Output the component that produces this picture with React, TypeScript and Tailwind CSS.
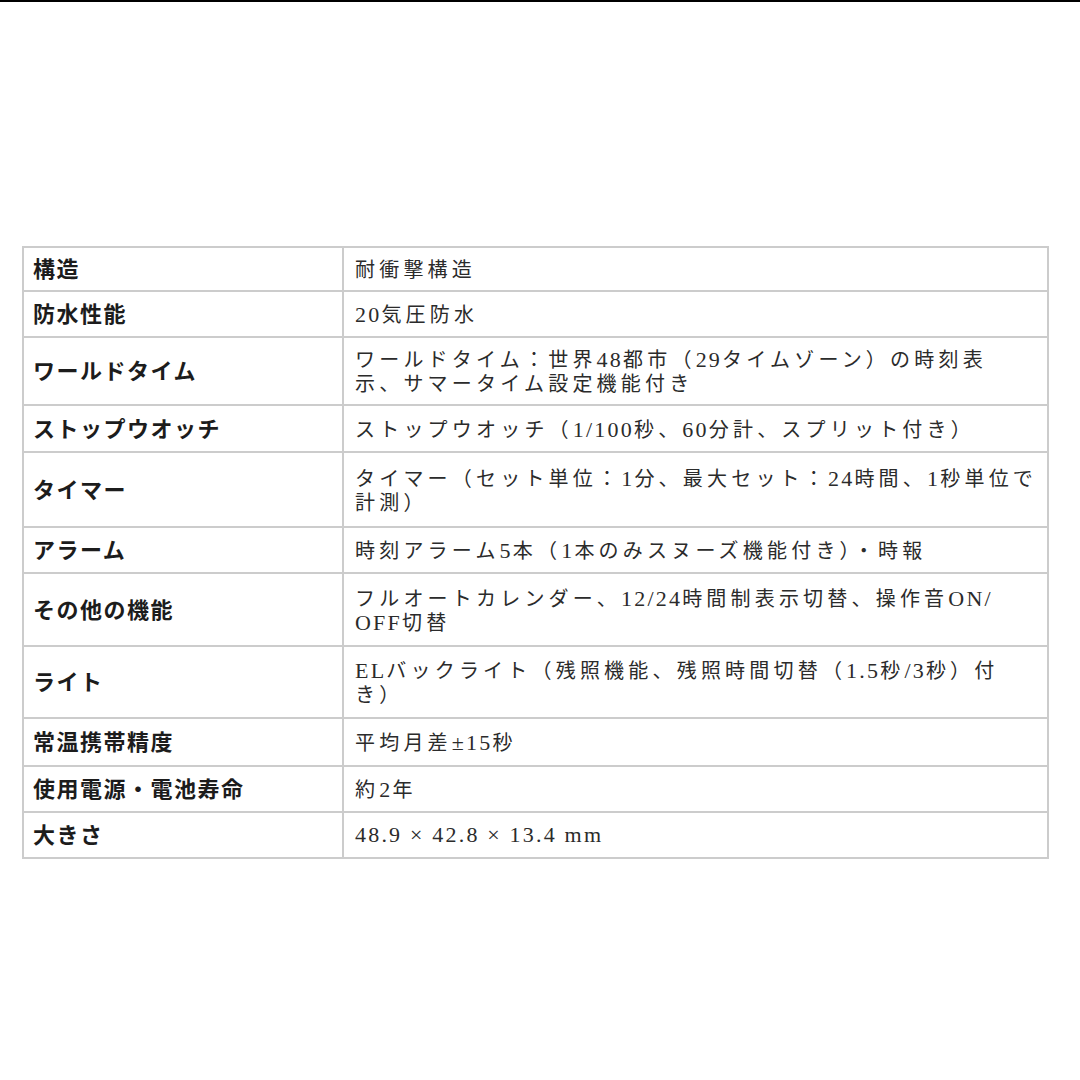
import React from "react";

type Row = { label: string; lines: string[]; h: string };

const rows: Row[] = [
  { label: "構造", lines: ["耐衝撃構造"], h: "h-[44px]" },
  { label: "防水性能", lines: ["20気圧防水"], h: "h-[46px]" },
  {
    label: "ワールドタイム",
    lines: ["ワールドタイム：世界48都市（29タイムゾーン）の時刻表", "示、サマータイム設定機能付き"],
    h: "h-[68px]",
  },
  {
    label: "ストップウオッチ",
    lines: ["ストップウオッチ（1/100秒、60分計、スプリット付き）"],
    h: "h-[47px]",
  },
  {
    label: "タイマー",
    lines: ["タイマー（セット単位：1分、最大セット：24時間、1秒単位で", "計測）"],
    h: "h-[75px]",
  },
  {
    label: "アラーム",
    lines: ["時刻アラーム5本（1本のみスヌーズ機能付き）・時報"],
    h: "h-[46px]",
  },
  {
    label: "その他の機能",
    lines: ["フルオートカレンダー、12/24時間制表示切替、操作音ON/", "OFF切替"],
    h: "h-[73px]",
  },
  {
    label: "ライト",
    lines: ["ELバックライト（残照機能、残照時間切替（1.5秒/3秒）付", "き）"],
    h: "h-[72px]",
  },
  { label: "常温携帯精度", lines: ["平均月差±15秒"], h: "h-[48px]" },
  { label: "使用電源・電池寿命", lines: ["約2年"], h: "h-[46px]" },
  { label: "大きさ", lines: ["48.9 × 42.8 × 13.4 mm"], h: "h-[44px]" },
];

function Runs({ text }: { text: string }) {
  const parts = text.split(/([\x20-\x7E±×]+)/).filter((p) => p.length > 0);
  return (
    <>
      {parts.map((p, i) =>
        /^[\x20-\x7E±×]+$/.test(p) ? (
          <span
            key={i}
            className="inline-block whitespace-pre leading-[24px] font-['Liberation_Serif',serif] text-[22px] tracking-[2.2px]"
          >
            {p}
          </span>
        ) : (
          <span
            key={i}
            className="inline-block leading-[24px] font-['Noto_Sans_CJK_JP',sans-serif] text-[20px] tracking-[4.2px]"
          >
            {p}
          </span>
        )
      )}
    </>
  );
}

export default function App() {
  return (
    <div className="w-[1080px] h-[1080px] bg-white border-t-2 border-black overflow-hidden">
      <div className="mt-[244px] ml-[22px] w-[1027px] border-2 border-[#cccccc] flex flex-col">
        {rows.map((r, i) => (
          <div
            key={i}
            className={`flex ${r.h} ${i < rows.length - 1 ? "border-b-2 border-[#cccccc]" : ""}`}
          >
            <div className="w-[320px] shrink-0 border-r-2 border-[#cccccc] flex items-center pl-[9px] pb-[4px]">
              <span className="font-['Noto_Sans_CJK_JP',sans-serif] font-bold text-[22px] leading-[26px] tracking-[1.5px] text-[#1c1c1c] whitespace-nowrap">
                {r.label}
              </span>
            </div>
            <div className="flex-1 flex items-center pl-[11px]">
              <div className="leading-[24px] text-[#2b2b2b] whitespace-nowrap">
                {r.lines.map((l, j) => (
                  <div key={j} className="h-[24px]">
                    <Runs text={l} />
                  </div>
                ))}
              </div>
            </div>
          </div>
        ))}
      </div>
    </div>
  );
}
